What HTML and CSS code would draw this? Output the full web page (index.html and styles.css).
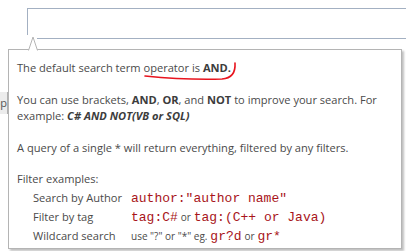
FILE: index.html
```html
<!DOCTYPE html>
<html lang="en">
<head>
    <meta charset="UTF-8">
    <title>Search help</title>
    <link rel="stylesheet" href="styles.css">
</head>
<body>
    <div class="search-box"></div>
    <div class="side-btn">Stop</div>

    <div class="help-popup">
        <svg class="popup-arrow" width="14" height="17" viewBox="0 0 14 17">
            <rect x="0" y="1" width="11" height="6" fill="#fff"/>
            <polyline points="2.5,16.5 7,3 11.5,16.5" fill="#fff" stroke="#b4b4b4" stroke-width="1"/>
        </svg>

        <p>The default search term operator is <b>AND.</b></p>
        <p>You can use brackets, <b>AND</b>, <b>OR</b>, and <b>NOT</b> to improve your search. For example: <b><i>C# AND NOT(VB or SQL)</i></b></p>
        <p>A query of a single * will return everything, filtered by any filters.</p>

        <div class="filter-title">Filter examples:</div>
        <div class="filter-grid">
            <span>Search by Author</span>
            <span><code>author:"author name"</code></span>
            <span>Filter by tag</span>
            <span><code>tag:C#</code> <small>or</small> <code>tag:(C++ or Java)</code></span>
            <span>Wildcard search</span>
            <span><small>use "?" or "*" eg.</small> <code>gr?d</code> <small>or</small> <code>gr*</code></span>
        </div>
    </div>

    <!-- hand drawn mark under "operator is AND." -->
    <svg class="scribble" width="406" height="251" viewBox="0 0 406 251">
        <path d="M145 76 Q185 80 222 79 Q236 78 235 63" fill="none" stroke="#e8141e" stroke-width="1.6" stroke-linecap="round"/>
    </svg>
</body>
</html>
```

FILE: styles.css
```css
* {
    margin: 0;
    padding: 0;
    box-sizing: border-box;
}

body {
    background: #fff;
    font-family: 'Open Sans', 'DejaVu Sans', sans-serif;
    overflow: hidden;
    width: 406px;
    height: 251px;
}

/* Search input behind the popup */
.search-box {
    margin: 8px 0 0 27px;
    width: 400px;
    height: 31px;
    border: 1px solid #a3b0c2;
    border-right: none;
}

.side-btn {
    margin-top: 53px;
    width: 8px;
    height: 22px;
    overflow: hidden;
    direction: rtl;
    background: #ececec;
    border-right: 1px solid #b0b0b0;
    font-size: 11px;
    line-height: 22px;
    color: #555;
    white-space: nowrap;
}

/* Help popup */
.help-popup {
    position: absolute;
    left: 8px;
    top: 49px;
    width: 394px;
    height: 200px;
    background: #fff;
    border: 1px solid #b4b4b4;
    box-shadow: 2px 2px 2px rgba(0, 0, 0, 0.25);
    padding: 10px 10px 0 8px;
    color: #4a4a4a;
    font-size: 11.1px;
    line-height: 16.5px;
}

.popup-arrow {
    position: absolute;
    left: 17px;
    top: -16px;
}

.help-popup p {
    margin-bottom: 15px;
}

.help-popup b {
    color: #3c3c3c;
}

.filter-grid {
    display: grid;
    grid-template-columns: 98px 1fr;
    row-gap: 1px;
    padding-left: 16px;
    margin-top: 1px;
    align-items: baseline;
    line-height: 17px;
}

.filter-grid code {
    font-family: 'Liberation Mono', 'DejaVu Sans Mono', monospace;
    font-size: 13px;
    color: #a8141a;
}

.filter-grid small {
    font-size: 10px;
}

.scribble {
    position: absolute;
    left: 0;
    top: 0;
    pointer-events: none;
}
```
